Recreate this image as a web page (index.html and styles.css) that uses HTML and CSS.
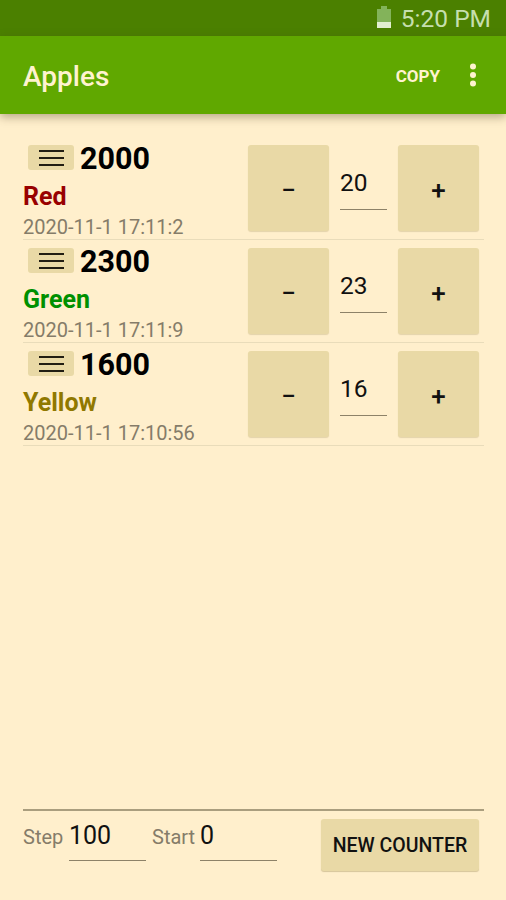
FILE: index.html
```
<!DOCTYPE html>
<html lang="en">
<head>
    <meta charset="UTF-8">
    <meta name="viewport" content="width=device-width, initial-scale=1.0">
    <title>Apples</title>
    <link rel="stylesheet" href="styles.css">
</head>
<body>
    <div class="status-bar">
        <svg class="battery" width="16" height="23" viewBox="0 0 16 23">
            <path d="M5 0h6v3h4v13H1V3h4z" fill="#83b35a"/>
            <path d="M1 16h14v6H1z" fill="#e2efd0"/>
        </svg>
        <span class="clock">5:20 PM</span>
    </div>
    <header>
        <h1>Apples</h1>
        <button class="copy-btn">COPY</button>
        <svg class="more" width="8" height="24" viewBox="0 0 8 24">
            <circle cx="4" cy="3.4" r="3"/>
            <circle cx="4" cy="12" r="3"/>
            <circle cx="4" cy="20.4" r="3"/>
        </svg>
    </header>
    <main>
        <div class="counter">
            <div class="info">
                <div class="total">
                    <span class="handle"><i></i><i></i><i></i></span>
                    <strong>2000</strong>
                </div>
                <div class="name red">Red</div>
                <div class="date">2020-11-1 17:11:2</div>
            </div>
            <button class="step-btn minus"><span>−</span></button>
            <input class="count" type="text" value="20">
            <button class="step-btn plus"><span>+</span></button>
        </div>
        <div class="counter">
            <div class="info">
                <div class="total">
                    <span class="handle"><i></i><i></i><i></i></span>
                    <strong>2300</strong>
                </div>
                <div class="name green">Green</div>
                <div class="date">2020-11-1 17:11:9</div>
            </div>
            <button class="step-btn minus"><span>−</span></button>
            <input class="count" type="text" value="23">
            <button class="step-btn plus"><span>+</span></button>
        </div>
        <div class="counter">
            <div class="info">
                <div class="total">
                    <span class="handle"><i></i><i></i><i></i></span>
                    <strong>1600</strong>
                </div>
                <div class="name yellow">Yellow</div>
                <div class="date">2020-11-1 17:10:56</div>
            </div>
            <button class="step-btn minus"><span>−</span></button>
            <input class="count" type="text" value="16">
            <button class="step-btn plus"><span>+</span></button>
        </div>
    </main>
    <footer>
        <label for="step">Step</label>
        <input id="step" type="text" value="100">
        <label for="start" class="start-label">Start</label>
        <input id="start" type="text" value="0">
        <button class="new-btn">NEW COUNTER</button>
    </footer>
</body>
</html>
```
FILE: styles.css
```
* {
    margin: 0;
    padding: 0;
    box-sizing: border-box;
}

body {
    display: flex;
    flex-direction: column;
    height: 900px;
    overflow: hidden;
    font-family: Roboto, "Liberation Sans", sans-serif;
    background-color: #ffefcc;
    color: #111;
}

button,
input {
    font-family: inherit;
    color: inherit;
    border: none;
    background: none;
}

/* Top bars */
.status-bar {
    display: flex;
    align-items: center;
    justify-content: flex-end;
    height: 36px;
    padding: 2px 15px 0 0;
    background-color: #4b8000;
}

.battery {
    margin: 0 9px 3px 0;
}

.clock {
    font-size: 24.5px;
    line-height: 30px;
    color: #c6dfae;
}

header {
    display: flex;
    align-items: center;
    height: 78px;
    padding: 2px 29px 0 23px;
    background-color: #60a800;
    color: #fff3cf;
    box-shadow: 0 3px 9px rgba(70, 60, 30, 0.4);
}

header h1 {
    flex: 1;
    font-size: 28px;
    font-weight: 500;
}

.copy-btn {
    font-size: 17px;
    font-weight: 700;
    margin-right: 29px;
}

.more {
    margin-bottom: 2px;
    fill: #fff3cf;
}

/* Counter list */
main {
    flex: 1;
    padding: 23px 22px 0 23px;
}

.counter {
    display: flex;
    height: 103px;
    border-bottom: 1px solid #e9dcba;
}

.info {
    width: 225px;
}

.total {
    display: flex;
    align-items: center;
    height: 43px;
    padding-left: 5px;
}

.total strong {
    font-size: 30.5px;
    line-height: 43px;
    color: #000;
}

.handle {
    display: flex;
    flex-direction: column;
    align-items: center;
    justify-content: center;
    gap: 5px;
    width: 46px;
    height: 25px;
    margin-right: 6px;
    margin-bottom: 2px;
    border-radius: 3px;
    background-color: #e9d9a6;
}

.handle i {
    width: 25px;
    height: 2px;
    background-color: #211d12;
}

.name {
    font-size: 25px;
    font-weight: 700;
    line-height: 34px;
}

.red {
    color: #980000;
}

.green {
    color: #009000;
}

.yellow {
    color: #907800;
}

.date {
    font-size: 20px;
    line-height: 26px;
    color: #857c69;
}

.step-btn {
    width: 81px;
    height: 86px;
    margin-top: 8px;
    padding-top: 3px;
    border-radius: 3px;
    background-color: #e9d9a6;
    box-shadow: 0 1px 1px rgba(120, 100, 40, 0.2);
    font-size: 26px;
    font-weight: 500;
}

.count {
    width: 47px;
    height: 47px;
    margin: 26px 11px 0 11px;
    padding-bottom: 7px;
    border-bottom: 1px solid #8d8268;
    font-size: 24.5px;
}

/* New counter form */
footer {
    display: flex;
    align-items: flex-start;
    height: 91px;
    margin: 0 22px 0 23px;
    padding-top: 8px;
    border-top: 2px solid #aa9e7e;
}

footer label {
    width: 46px;
    padding-top: 6px;
    font-size: 20px;
    line-height: 24px;
    color: #857c69;
}

footer .start-label {
    width: 48px;
    margin-left: 6px;
}

footer input {
    width: 77px;
    height: 42px;
    padding-bottom: 9px;
    border-bottom: 1px solid #8d8268;
    font-size: 25px;
}

.new-btn {
    width: 158px;
    height: 52px;
    margin-left: auto;
    margin-right: 5px;
    border-radius: 3px;
    background-color: #e9d9a6;
    box-shadow: 0 1px 1px rgba(120, 100, 40, 0.3);
    font-size: 19.5px;
    font-weight: 500;
    white-space: nowrap;
}
```
